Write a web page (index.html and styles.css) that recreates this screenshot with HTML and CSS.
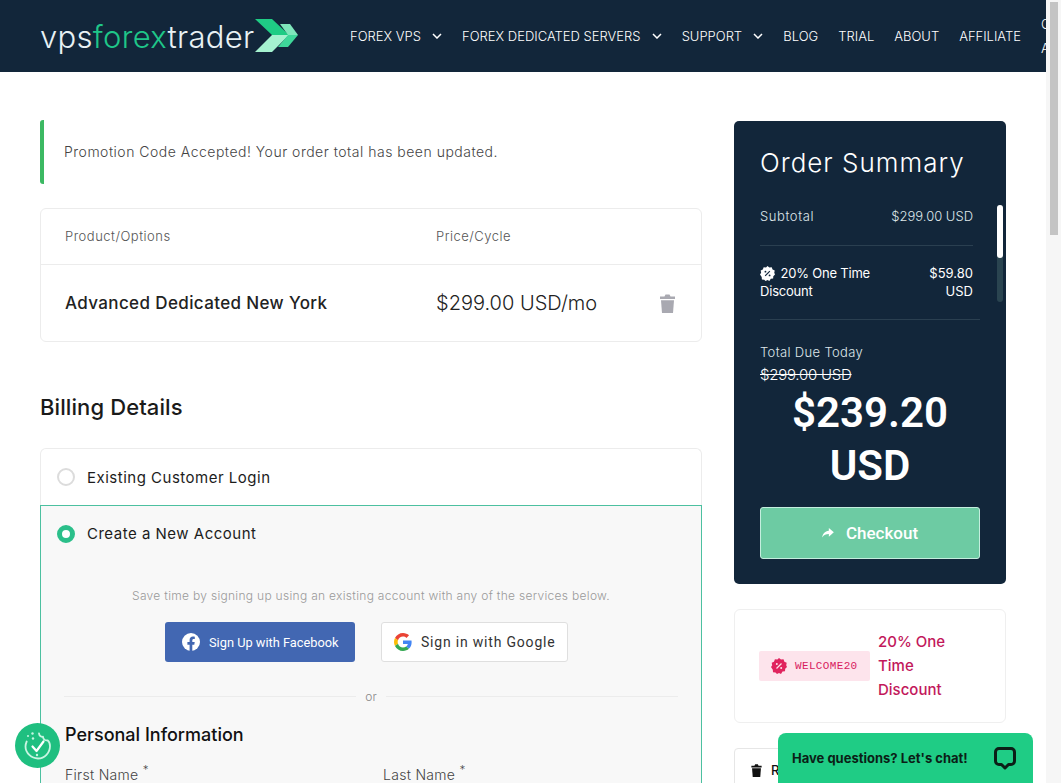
FILE: index.html
```html
<!DOCTYPE html>
<html lang="en">

<head>
    <meta charset="UTF-8">
    <meta name="viewport" content="width=device-width, initial-scale=1.0">
    <title>Checkout - vpsforextrader</title>
    <link rel="stylesheet" href="styles.css">
</head>

<body>
    <div class="page">
        <!-- Header -->
        <header>
            <a href="#" class="logo">
                <span class="logo-text">vps<em>forex</em>trader</span>
                <svg width="44" height="34" viewBox="0 0 44 34">
                    <polygon points="0,0 17,0 34,16 17,16" fill="#1fcc85" />
                    <polygon points="17,16 34,16 17,33 0,33" fill="#a5f2d0" />
                    <polygon points="25,5 35,5 43,16 33,16" fill="#7fe6bb" />
                    <polygon points="33,16 43,16 33,28 23,28" fill="#3fd79a" />
                </svg>
            </a>
            <nav>
                <ul>
                    <li><a href="#">FOREX VPS <svg class="caret" viewBox="0 0 10 6"><path d="M1 1l4 4 4-4" /></svg></a></li>
                    <li><a href="#">FOREX DEDICATED SERVERS <svg class="caret" viewBox="0 0 10 6"><path d="M1 1l4 4 4-4" /></svg></a></li>
                    <li><a href="#">SUPPORT <svg class="caret" viewBox="0 0 10 6"><path d="M1 1l4 4 4-4" /></svg></a></li>
                    <li><a href="#">BLOG</a></li>
                    <li><a href="#">TRIAL</a></li>
                    <li><a href="#">ABOUT</a></li>
                    <li><a href="#">AFFILIATE</a></li>
                    <li class="nav-wrap"><a href="#">CLIENT<br>AREA</a></li>
                </ul>
            </nav>
        </header>

        <main class="checkout">
            <!-- Left column -->
            <section class="content">
                <div class="alert">Promotion Code Accepted! Your order total has been updated.</div>

                <div class="cart">
                    <div class="cart-row cart-head">
                        <span>Product/Options</span>
                        <span>Price/Cycle</span>
                    </div>
                    <div class="cart-row cart-item">
                        <span class="item-name">Advanced Dedicated New York</span>
                        <span class="item-price">$299.00 USD/mo</span>
                        <svg class="item-remove" width="15" height="19" viewBox="0 0 15 19">
                            <path d="M0 2.5h4.5L5.5 0.5h4l1 2H15V5H0z" />
                            <path d="M1 6.2h13L13 19H2z" />
                        </svg>
                    </div>
                </div>

                <h2 class="section-title">Billing Details</h2>

                <div class="account-option">
                    <span class="radio"></span>
                    <span>Existing Customer Login</span>
                </div>
                <div class="account-new">
                    <div class="account-new-head">
                        <span class="radio radio-on"></span>
                        <span>Create a New Account</span>
                    </div>
                    <p class="social-note">Save time by signing up using an existing account with any of the services below.</p>
                    <div class="social-buttons">
                        <a href="#" class="btn-facebook">
                            <svg width="18" height="18" viewBox="0 0 18 18">
                                <circle cx="9" cy="9" r="9" fill="#fff" />
                                <path d="M7.6 18v-6.3H5.4V9h2.2V7c0-2.2 1.3-3.4 3.300-3.400.9 0 1.900.2 1.900.2v2.200h-1.100c-1.100 0-1.400.7-1.400 1.400V9h2.400l-.4 2.700h-2V18z" fill="#4267b2" />
                            </svg>
                            Sign Up with Facebook
                        </a>
                        <a href="#" class="btn-google">
                            <svg width="18" height="18" viewBox="0 0 48 48">
                                <path fill="#EA4335" d="M24 9.500c3.500 0 6.700 1.200 9.200 3.600l6.900-6.900C35.900 2.400 30.500 0 24 0 14.600 0 6.500 5.400 2.600 13.200l8 6.200C12.400 13.700 17.700 9.500 24 9.500z" />
                                <path fill="#4285F4" d="M47 24.500c0-1.600-.2-3.100-.4-4.500H24v9h12.900c-.6 3-2.200 5.500-4.800 7.200l7.700 6c4.500-4.200 7.200-10.300 7.200-17.700z" />
                                <path fill="#FBBC05" d="M10.600 28.600c-.5-1.400-.8-3-.8-4.600s.3-3.200.8-4.600l-8-6.200C.9 16.500 0 20.100 0 24s.9 7.500 2.600 10.800z" />
                                <path fill="#34A853" d="M24 48c6.500 0 11.900-2.100 15.900-5.800l-7.700-6c-2.100 1.400-4.900 2.300-8.200 2.300-6.300 0-11.600-4.200-13.400-10l-8 6.200C6.500 42.600 14.600 48 24 48z" />
                            </svg>
                            Sign in with Google
                        </a>
                    </div>
                    <div class="divider"><span>or</span></div>
                    <h3 class="sub-title">Personal Information</h3>
                    <div class="form-row">
                        <div class="form-group">
                            <label>First Name <sup>*</sup></label>
                            <input type="text">
                        </div>
                        <div class="form-group">
                            <label>Last Name <sup>*</sup></label>
                            <input type="text">
                        </div>
                    </div>
                </div>
            </section>

            <!-- Sidebar -->
            <aside class="sidebar">
                <div class="summary">
                    <h2>Order Summary</h2>
                    <div class="summary-scroll"><span></span></div>
                    <div class="summary-rows">
                        <div class="summary-row summary-sub">
                            <span class="sub-label">Subtotal</span>
                            <span>$299.00 USD</span>
                        </div>
                        <div class="summary-row summary-discount">
                            <span class="discount-name">
                                <svg width="15" height="15" viewBox="0 0 16 16">
                                    <path fill="#fff" d="M8 0l2 1.600 2.500-.3.900 2.400 2.300 1-.5 2.500L16 9l-1.800 1.800-.2 2.500-2.500.3L10 16l-2-1-2 1-1.500-1.400-2.500-.3-.2-2.500L0 9l1.200-1.800-.5-2.500 2.300-1 .9-2.400 2.500.3z" />
                                    <path stroke="#12263a" stroke-width="1.300" d="M5.500 10.500l5-5" />
                                    <circle cx="5.800" cy="6" r="1" fill="#12263a" />
                                    <circle cx="10.200" cy="10" r="1" fill="#12263a" />
                                </svg>
                                20% One Time Discount
                            </span>
                            <span class="discount-value">$59.80 USD</span>
                        </div>
                    </div>
                    <div class="summary-total">
                        <div class="total-label">Total Due Today</div>
                        <div class="total-old">$299.00 USD</div>
                        <div class="total-new">$239.20 USD</div>
                    </div>
                    <a href="#" class="btn-checkout">
                        <svg width="12" height="10" viewBox="0 0 14 12"><path fill="#fff" d="M8 0l6 5.200-6 5.200V7.300C4.500 7.300 2 8.300 0 11.500 .5 7 3 3.800 8 3.200z" /></svg>
                        Checkout
                    </a>
                </div>

                <div class="promo">
                    <span class="promo-code">
                        <svg width="16" height="16" viewBox="0 0 16 16">
                            <path fill="#e0245e" d="M8 0l2 1.600 2.500-.3.900 2.400 2.300 1-.5 2.500L16 9l-1.800 1.800-.2 2.500-2.500.3L10 16l-2-1-2 1-1.500-1.400-2.500-.3-.2-2.500L0 9l1.200-1.800-.5-2.500 2.300-1 .9-2.400 2.500.3z" />
                            <path stroke="#fde4ec" stroke-width="1.300" d="M5.500 10.500l5-5" />
                            <circle cx="5.800" cy="6" r="1" fill="#fde4ec" />
                            <circle cx="10.200" cy="10" r="1" fill="#fde4ec" />
                        </svg>
                        WELCOME20
                    </span>
                    <span class="promo-text">20% One Time Discount</span>
                </div>

                <div class="promo-remove">
                    <svg width="11" height="13" viewBox="0 0 15 19">
                        <path d="M0 2.500h4.500L5.500 .5h4l1 2H15V5H0z" />
                        <path d="M1 6.200h13L13 19H2z" />
                    </svg>
                    <span>Remove Promotion Code</span>
                </div>
            </aside>
        </main>
    </div>

    <!-- Fake page scrollbar -->
    <div class="scrollbar"><span></span></div>

    <!-- Floating widgets -->
    <a href="#" class="cookie-badge">
        <svg width="32" height="32" viewBox="0 0 32 32" fill="none" stroke="#c9f5e2" stroke-width="1.800" stroke-linecap="round" stroke-linejoin="round">
            <path d="M17 3.500c.5 3 2.500 3.500 4 3.200.2 2.500 2 4 4.500 3.600 1.300 1 2.500 3 2.500 5.700 0 7-5.500 12.500-12 12.500S3.500 23 3.500 16.500c0-2 .5-3.500 1.200-5" />
            <path d="M10.500 16.500l4 4.500 7-9.500" stroke="#fff" stroke-width="2.200" />
            <circle cx="6" cy="6" r="1" fill="#c9f5e2" stroke="none" />
            <circle cx="10.500" cy="3.500" r="1.200" fill="#c9f5e2" stroke="none" />
            <circle cx="11" cy="8.500" r="1.200" fill="#c9f5e2" stroke="none" />
            <circle cx="15" cy="25" r="1.200" fill="#c9f5e2" stroke="none" />
        </svg>
    </a>
    <div class="chat-widget">
        <span>Have questions? Let's chat!</span>
        <svg width="24" height="24" viewBox="0 0 24 24" fill="none" stroke="#0b1f17" stroke-width="3" stroke-linejoin="round">
            <path d="M6 2.500h12a3.500 3.500 0 0 1 3.500 3.500v9a3.500 3.500 0 0 1-3.500 3.500h-2.500L12 22l-3.500-3.500H6A3.500 3.500 0 0 1 2.500 15V6A3.500 3.500 0 0 1 6 2.500z" />
        </svg>
    </div>
</body>

</html>
```

FILE: styles.css
```css
/* Base Styles */
* {
    margin: 0;
    padding: 0;
    box-sizing: border-box;
    font-family: 'Inter', 'Liberation Sans', sans-serif;
}

html,
body {
    height: 100%;
    overflow: hidden;
}

body {
    display: flex;
    background-color: #ffffff;
    color: #333;
}

a {
    text-decoration: none;
}

.page {
    flex: 1;
    min-width: 0;
    overflow: hidden;
}

/* Scrollbar */
.scrollbar {
    flex: 0 0 15px;
    background-color: #f6f6f6;
    padding: 2px 3px 0 4px;
}

.scrollbar span {
    display: block;
    height: 233px;
    background-color: #c4c4c4;
}

/* Header Styles */
header {
    height: 72px;
    background-color: #12263a;
    padding-left: 40px;
    display: flex;
    align-items: center;
    overflow: hidden;
}

.logo {
    flex: 0 0 310px;
    display: flex;
    align-items: center;
}

.logo-text {
    flex: 0 0 215px;
    font-size: 31px;
    font-weight: 300;
    letter-spacing: 0.3px;
    color: #e8f1f4;
    white-space: nowrap;
}

.logo-text em {
    font-style: normal;
    color: #1fc689;
}

nav ul {
    display: flex;
    align-items: center;
    list-style: none;
    gap: 20px;
    white-space: nowrap;
}

nav ul li a {
    color: #ffffff;
    font-size: 13px;
    font-weight: 300;
    line-height: 24px;
    display: block;
}

.caret {
    width: 10px;
    height: 6px;
    margin-left: 7.500px;
    vertical-align: 2px;
    fill: none;
    stroke: #ffffff;
    stroke-width: 1.500;
}

/* Layout */
.checkout {
    display: flex;
    align-items: flex-start;
    gap: 32px;
    padding: 48px 0 0 40px;
}

.content {
    flex: 0 0 662px;
}

.sidebar {
    flex: 0 0 272px;
    padding-top: 1px;
}

/* Alert */
.alert {
    height: 64px;
    border-left: 4px solid #3cb963;
    border-radius: 3px;
    padding: 0 0 2px 20px;
    display: flex;
    align-items: center;
    font-size: 14px;
    font-weight: 300;
    letter-spacing: 0.5px;
    color: #444;
}

/* Cart */
.cart {
    margin-top: 24px;
    border: 1px solid #ececec;
    border-radius: 6px;
}

.cart-row {
    display: grid;
    grid-template-columns: 371px 224px 1fr;
    align-items: center;
    padding-left: 24px;
}

.cart-head {
    height: 56px;
    padding-bottom: 2px;
    border-bottom: 1px solid #ececec;
    font-size: 13px;
    font-weight: 300;
    letter-spacing: 0.5px;
    color: #555;
}

.cart-item {
    height: 76px;
}

.item-name {
    font-size: 17px;
    font-weight: 500;
    letter-spacing: 0.37px;
    color: #222;
}

.item-price {
    font-size: 20px;
    font-weight: 300;
    color: #222;
}

.item-remove {
    fill: #a9a9b1;
}

.section-title {
    margin-top: 50px;
    font-size: 22px;
    font-weight: 500;
    line-height: 30px;
    letter-spacing: 0.1px;
    color: #1a1a1a;
}

/* Account options */
.account-option,
.account-new-head {
    display: flex;
    align-items: center;
    gap: 12px;
    padding-left: 16px;
    font-size: 15px;
    font-weight: 400;
    letter-spacing: 0.5px;
    color: #1c1c1c;
}

.account-option {
    height: 57px;
    margin-top: 26px;
    border: 1px solid #ececec;
    border-bottom: none;
    border-radius: 6px 6px 0 0;
}

.account-new-head {
    height: 55px;
}

.account-new {
    border: 1px solid #4cc0a0;
    background-color: #f8f8f8;
    padding-bottom: 40px;
}

.radio {
    width: 18px;
    height: 18px;
    border: 2px solid #dcdcdc;
    border-radius: 50%;
    background-color: #ffffff;
}

.radio-on {
    border: 5px solid #2bbf8a;
}

.social-note {
    margin-top: 26px;
    text-align: center;
    font-size: 12px;
    font-weight: 300;
    line-height: 18px;
    letter-spacing: 0.3px;
    color: #9a9a9a;
}

.social-buttons {
    display: flex;
    justify-content: center;
    gap: 26px;
    margin-top: 17px;
    padding-right: 9px;
}

.btn-facebook,
.btn-google {
    display: flex;
    align-items: center;
    gap: 9px;
    height: 40px;
    border-radius: 3px;
    white-space: nowrap;
}

.btn-facebook {
    width: 190px;
    padding-left: 17px;
    background-color: #4267b2;
    color: #ffffff;
    font-family: 'Roboto', sans-serif;
    font-size: 12.8px;
}

.btn-google {
    width: 187px;
    padding-left: 12px;
    background-color: #ffffff;
    border: 1px solid #dfdfdf;
    color: #333;
    font-family: 'Roboto', sans-serif;
    font-size: 14px;
    letter-spacing: 0.8px;
}

.divider {
    margin: 25px 23px 0;
    height: 18px;
    display: flex;
    align-items: center;
    justify-content: center;
    background: linear-gradient(#ececec, #ececec) center / 100% 1px no-repeat;
}

.divider span {
    background-color: #f8f8f8;
    padding: 0 9px;
    font-size: 12px;
    font-weight: 300;
    color: #888;
}

.sub-title {
    margin: 16px 0 0 24px;
    font-size: 18px;
    font-weight: 500;
    line-height: 28px;
    color: #111;
}

.form-row {
    display: grid;
    grid-template-columns: 318px 1fr;
    padding: 0 24px;
    margin-top: 11px;
}

.form-group label {
    display: block;
    font-size: 14px;
    font-weight: 300;
    line-height: 20px;
    letter-spacing: 0.3px;
    color: #444;
}

.form-group input {
    width: 280px;
    height: 44px;
    margin-top: 6px;
    border: 1px solid #ddd;
    border-radius: 4px;
}

/* Order summary */
.summary {
    position: relative;
    height: 463px;
    background-color: #12263a;
    border-radius: 5px;
    padding: 24px 26px 0;
    color: #ffffff;
}

.summary h2 {
    font-size: 26px;
    font-weight: 300;
    line-height: 36px;
    letter-spacing: 1px;
}

.summary-scroll {
    position: absolute;
    top: 84px;
    left: 263px;
    width: 6px;
    height: 97px;
    border-radius: 3px;
    background-color: #2a4450;
}

.summary-scroll span {
    display: block;
    height: 53px;
    border-radius: 3px;
    background-color: #ffffff;
}

.summary-rows {
    width: 213px;
    font-size: 13px;
    font-weight: 300;
}

.summary-row {
    display: flex;
    justify-content: space-between;
}

.summary-sub {
    margin-top: 25px;
    padding-bottom: 19px;
    border-bottom: 1px solid #2a3f50;
    line-height: 20px;
    color: #dfe6ea;
}

.sub-label {
    letter-spacing: 0.6px;
}

.summary-discount {
    padding-top: 18px;
    padding-bottom: 19px;
    gap: 20px;
    width: 220px;
    border-bottom: 1px solid #2a3f50;
    line-height: 18px;
    font-weight: 400;
}

.discount-name {
    flex: 1;
    letter-spacing: -0.2px;
}

.discount-name svg {
    vertical-align: -3px;
    margin-right: 2px;
}

.discount-value {
    flex: 0 0 50px;
    text-align: right;
    padding-right: 7px;
    box-sizing: content-box;
}

.summary-total {
    width: 220px;
    margin-top: 22px;
}

.total-label {
    font-size: 13px;
    font-weight: 300;
    line-height: 21px;
    letter-spacing: 0.35px;
    color: #dfe6ea;
}

.total-old {
    font-size: 15px;
    font-weight: 300;
    line-height: 24px;
    letter-spacing: -0.25px;
    text-decoration: line-through;
}

.total-new {
    margin-top: -1px;
    text-align: center;
    font-family: 'Roboto', sans-serif;
    font-size: 42px;
    font-weight: 600;
    line-height: 53px;
}

.btn-checkout {
    display: flex;
    align-items: center;
    justify-content: center;
    gap: 12px;
    width: 220px;
    height: 52px;
    margin-top: 15px;
    background-color: #6dcba3;
    border: 1px solid #c4eede;
    border-radius: 3px;
    color: #ffffff;
    font-family: 'Roboto', sans-serif;
    font-size: 17px;
    font-weight: 500;
}

/* Promo card */
.promo {
    display: flex;
    align-items: center;
    gap: 8px;
    height: 114px;
    margin-top: 25px;
    padding-left: 24px;
    border: 1px solid #efefef;
    border-radius: 6px;
}

.promo-code {
    flex: 0 0 111px;
    display: flex;
    align-items: center;
    gap: 8px;
    height: 30px;
    padding-left: 12px;
    background-color: #fde4ec;
    border-radius: 2px;
    color: #d81b60;
    font-family: 'Liberation Mono', monospace;
    font-size: 11px;
    letter-spacing: 0.35px;
}

.promo-text {
    width: 90px;
    font-size: 15px;
    font-weight: 500;
    line-height: 24px;
    color: #c2185b;
}

.promo-remove {
    display: flex;
    align-items: center;
    gap: 9px;
    height: 44px;
    margin-top: 25px;
    padding-left: 16px;
    border: 1px solid #e6e6e6;
    border-radius: 4px;
    font-size: 13px;
    font-weight: 500;
    color: #111;
    white-space: nowrap;
    overflow: hidden;
}

.promo-remove svg {
    fill: #111;
}

/* Floating widgets */
.cookie-badge {
    position: fixed;
    left: 15px;
    top: 723px;
    width: 45px;
    height: 45px;
    border-radius: 50%;
    background-color: #1fbf80;
    display: flex;
    align-items: center;
    justify-content: center;
}

.chat-widget {
    position: fixed;
    left: 778px;
    top: 733px;
    width: 255px;
    height: 50px;
    padding: 0 16px 0 14px;
    background-color: #1fcc85;
    border-radius: 8px 8px 0 0;
    display: flex;
    align-items: center;
    justify-content: space-between;
    font-family: 'Noto Sans', sans-serif;
    font-size: 13px;
    font-weight: 700;
    color: #0b1f17;
}
```
